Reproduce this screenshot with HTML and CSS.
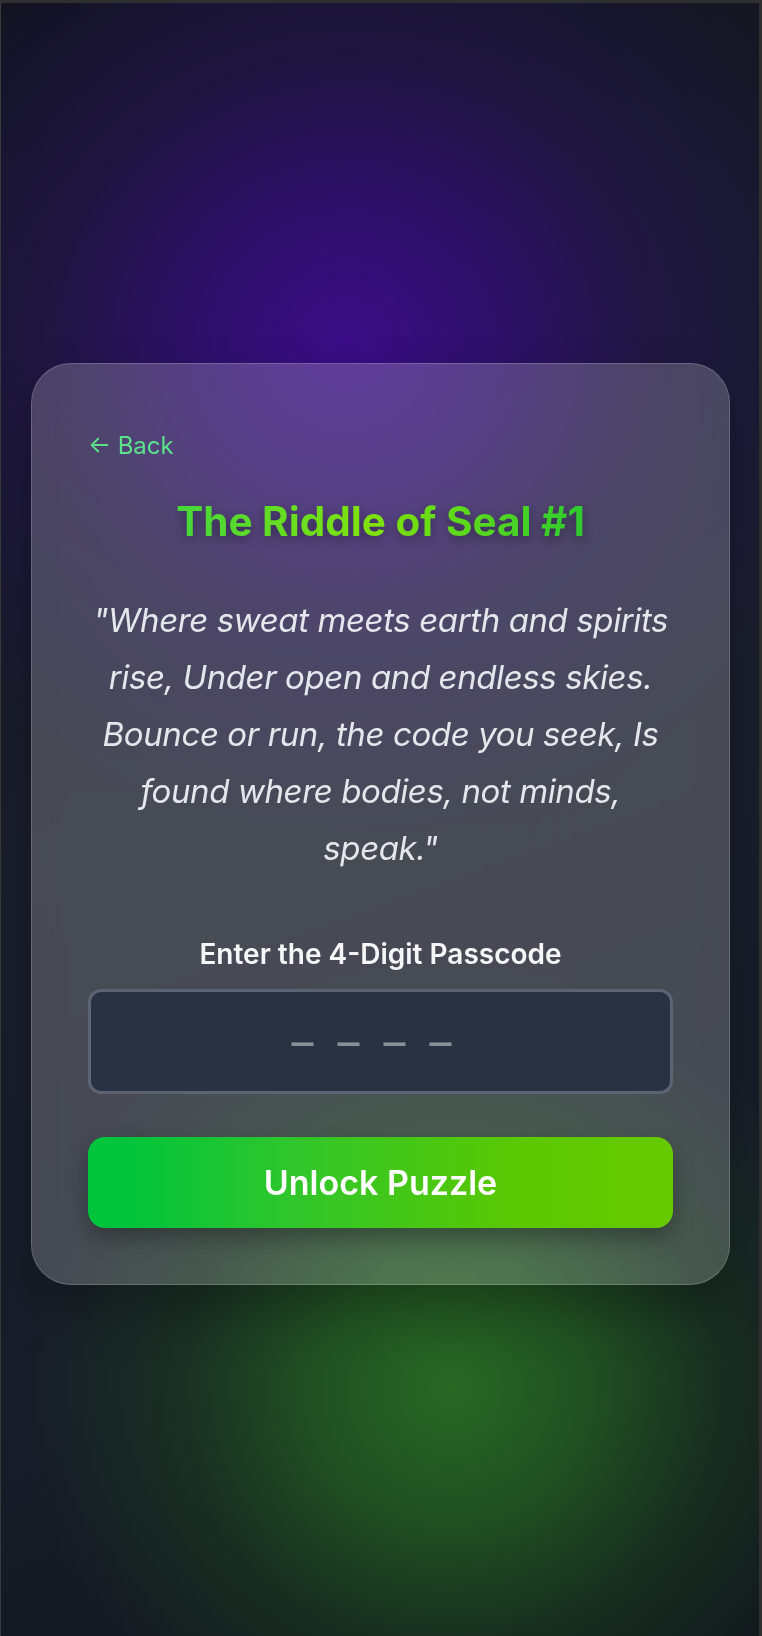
FILE: index.html
```html
<!DOCTYPE html>
<html lang="en">
<head>
<meta charset="utf-8">
<title>The Riddle of Seal #1</title>
<link rel="stylesheet" href="styles.css">
</head>
<body>
<div class="frame">
  <main class="card">
    <a class="back" href="#">← Back</a>
    <h1 class="title">The Riddle of Seal #1</h1>
    <p class="riddle">"Where sweat meets earth and spirits rise, Under open and endless skies. Bounce or run, the code you seek, Is found where bodies, not minds, speak."</p>
    <label class="label" for="code">Enter the 4-Digit Passcode</label>
    <input class="code" id="code" type="text" maxlength="4" placeholder="––––">
    <button class="unlock" type="button">Unlock Puzzle</button>
  </main>
</div>
</body>
</html>
```

FILE: styles.css
```css
* { box-sizing: border-box; }
html, body { margin: 0; padding: 0; }
body { background: #2e2e2e; }

.frame {
  min-height: 100vh;
  border-top: 3px solid #2f2f2f;
  border-left: 1px solid #3a3a3a;
  border-right: 3px solid #2f2f2f;
  display: flex;
  align-items: center;
  justify-content: center;
  padding: 9px 29px 0 30px;
  background:
    radial-gradient(ellipse 430px 420px at 450px 1385px, rgba(40,104,36,1) 0%, rgba(36,94,34,0.82) 30%, rgba(30,70,32,0.48) 62%, rgba(24,40,32,0) 100%),
    radial-gradient(ellipse 520px 500px at 345px 340px, rgba(58,13,134,1) 0%, rgba(50,15,118,0.85) 28%, rgba(38,20,88,0.55) 58%, rgba(28,24,56,0) 100%),
    linear-gradient(160deg, #11131d 0%, #1a1e2b 45%, #171c28 75%, #10141c 100%);
  font-family: Inter, "Noto Sans", sans-serif;
}

.card {
  width: 100%;
  display: flex;
  flex-direction: column;
  align-items: stretch;
  padding: 64px 56px 56px;
  border: 1px solid rgba(255,255,255,0.18);
  border-radius: 40px;
  background: rgba(255,255,255,0.2);
  -webkit-backdrop-filter: blur(14px);
  backdrop-filter: blur(14px);
  box-shadow: 0 25px 50px rgba(0,0,0,0.25);
}

.back {
  align-self: flex-start;
  color: #5ce28d;
  text-decoration: none;
  font-size: 24px;
  line-height: 36px;
  font-weight: 400;
}

.title {
  margin: 34px 0 0;
  align-self: center;
  font-size: 40.5px;
  line-height: 48px;
  font-weight: 700;
  background: linear-gradient(90deg, #46d63c 0%, #80e20c 48%, #2ecb30 100%);
  -webkit-background-clip: text;
  background-clip: text;
  color: transparent;
  -webkit-text-fill-color: transparent;
  filter: drop-shadow(0 4px 6px rgba(0,0,0,0.35));
}

.riddle {
  margin: 46px 0 0;
  text-align: center;
  font-style: italic;
  font-size: 33px;
  line-height: 57px;
  letter-spacing: -0.4px;
  color: #e6e7ec;
}

.label {
  margin-top: 58px;
  text-align: center;
  font-weight: 600;
  font-size: 28px;
  line-height: 39px;
  color: #f5f6f8;
}

.code {
  margin-top: 15px;
  height: 105px;
  width: 100%;
  border: 3px solid #5c6373;
  border-radius: 13px;
  background: #293242;
  color: #e5e7eb;
  text-align: center;
  font-family: Inter, sans-serif;
  font-size: 44px;
  letter-spacing: 24px;
  padding: 0 0 0 6px;
  outline: none;
}
.code::placeholder { color: #8a909a; }

.unlock {
  margin-top: 43px;
  height: 91px;
  width: 100%;
  border: none;
  border-radius: 17px;
  background: linear-gradient(90deg, #00c43c 6%, #30c62c 35%, #5cc800 75%, #67c900 100%);
  color: #ffffff;
  font-family: Inter, "Noto Sans", sans-serif;
  font-weight: 600;
  font-size: 34px;
  box-shadow: 0 10px 22px rgba(0,0,0,0.3);
  cursor: pointer;
}
```
